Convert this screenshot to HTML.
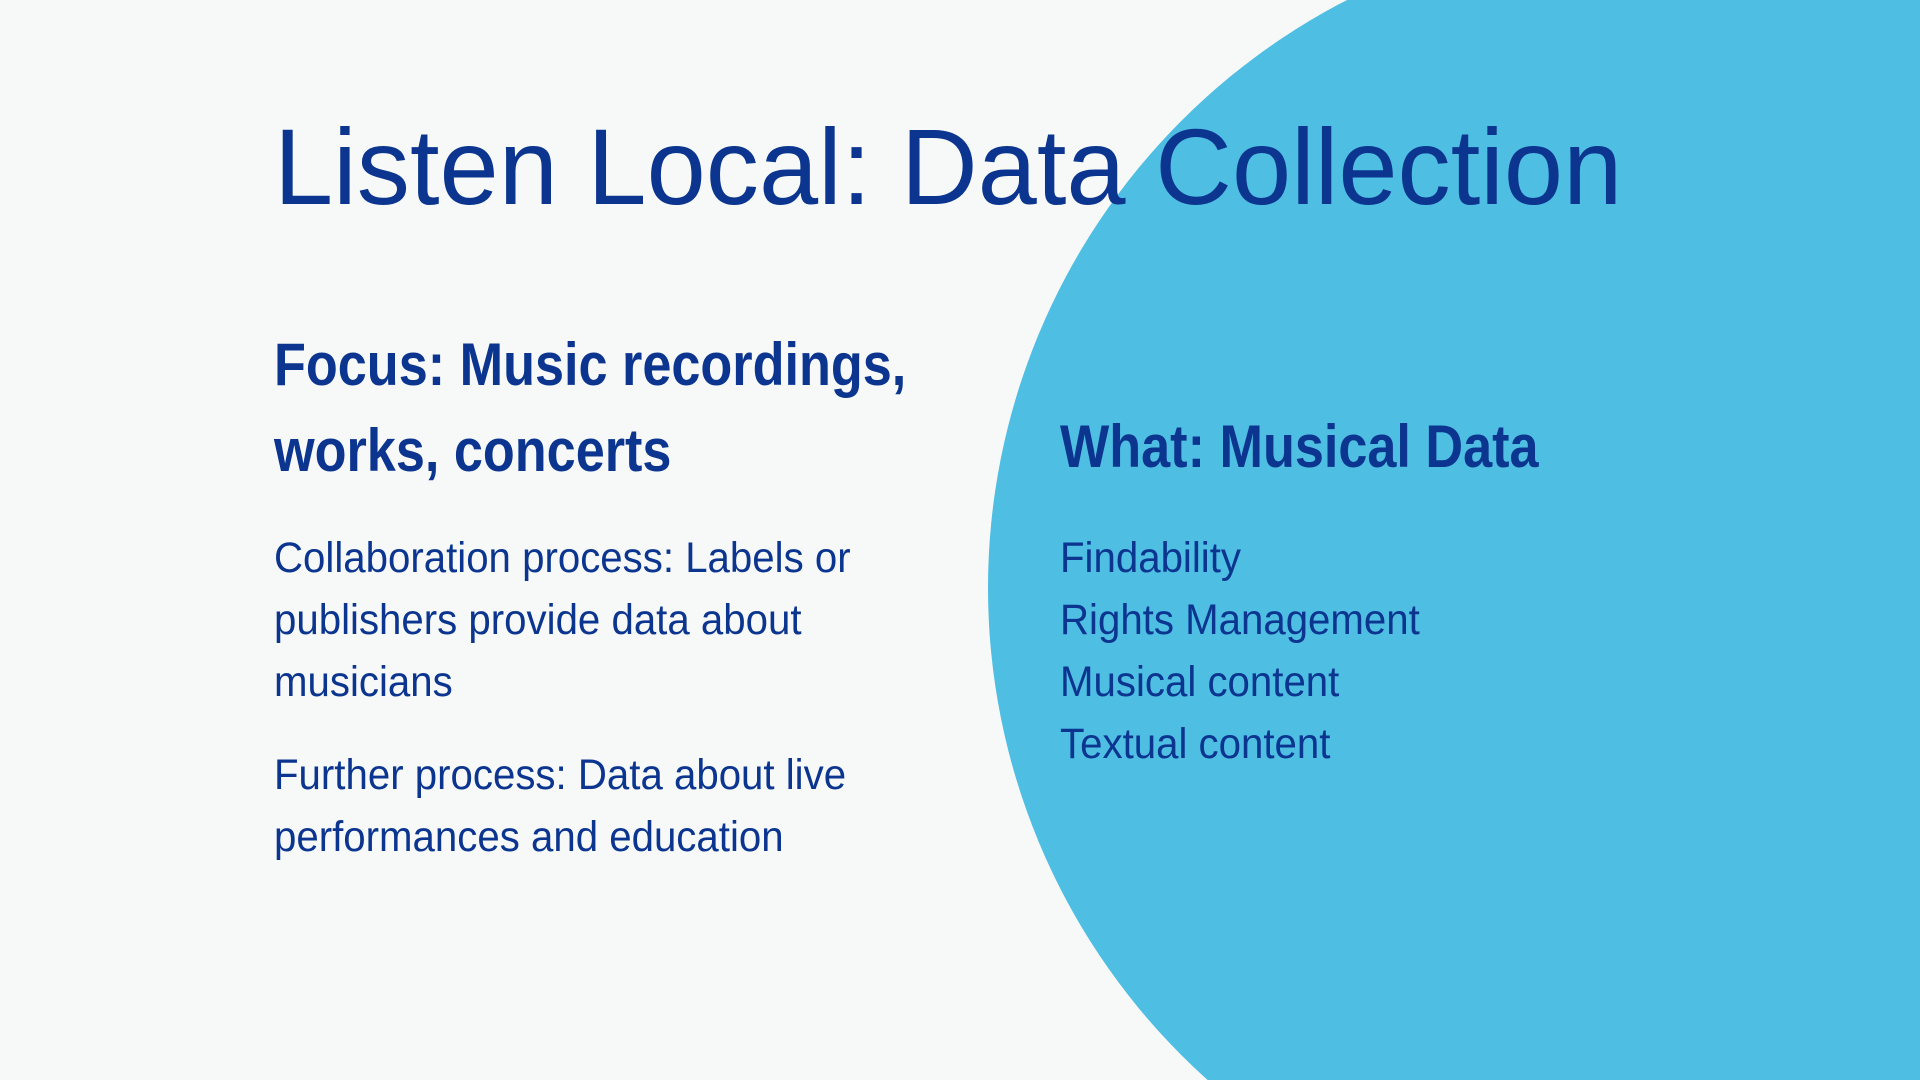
<!DOCTYPE html>
<html><head><meta charset="utf-8"><style>
html,body{margin:0;padding:0;width:1920px;height:1080px;overflow:hidden;}
body{background:#f7f9f9;color:#0b358f;font-family:"Liberation Sans",sans-serif;}
.w{position:relative;width:1920px;height:1080px;overflow:hidden;}
.c{position:absolute;left:988px;top:-73px;width:1322px;height:1322px;border-radius:50%;background:#4ebee3;}
.t{position:absolute;left:274px;top:113px;font-size:108px;line-height:108px;white-space:nowrap;transform:scaleX(0.985);transform-origin:left top;}
.h{position:absolute;font-weight:bold;font-size:60px;line-height:86px;white-space:nowrap;transform:scaleX(0.87);transform-origin:left top;}
.b{position:absolute;font-size:43px;line-height:62px;white-space:nowrap;transform:scaleX(0.935);transform-origin:left top;}
</style></head><body><div class="w">
<div class="c"></div>
<div class="t">Listen Local: Data Collection</div>
<div class="h" style="left:274px;top:322px">Focus: Music recordings,<br>works, concerts</div>
<div class="b" style="left:274px;top:527px">Collaboration process: Labels or<br>publishers provide data about<br>musicians</div>
<div class="b" style="left:274px;top:744px">Further process: Data about live<br>performances and education</div>
<div class="h" style="left:1060px;top:404px">What: Musical Data</div>
<div class="b" style="left:1060px;top:527px">Findability<br>Rights Management<br>Musical content<br>Textual content</div>
</div></body></html>
